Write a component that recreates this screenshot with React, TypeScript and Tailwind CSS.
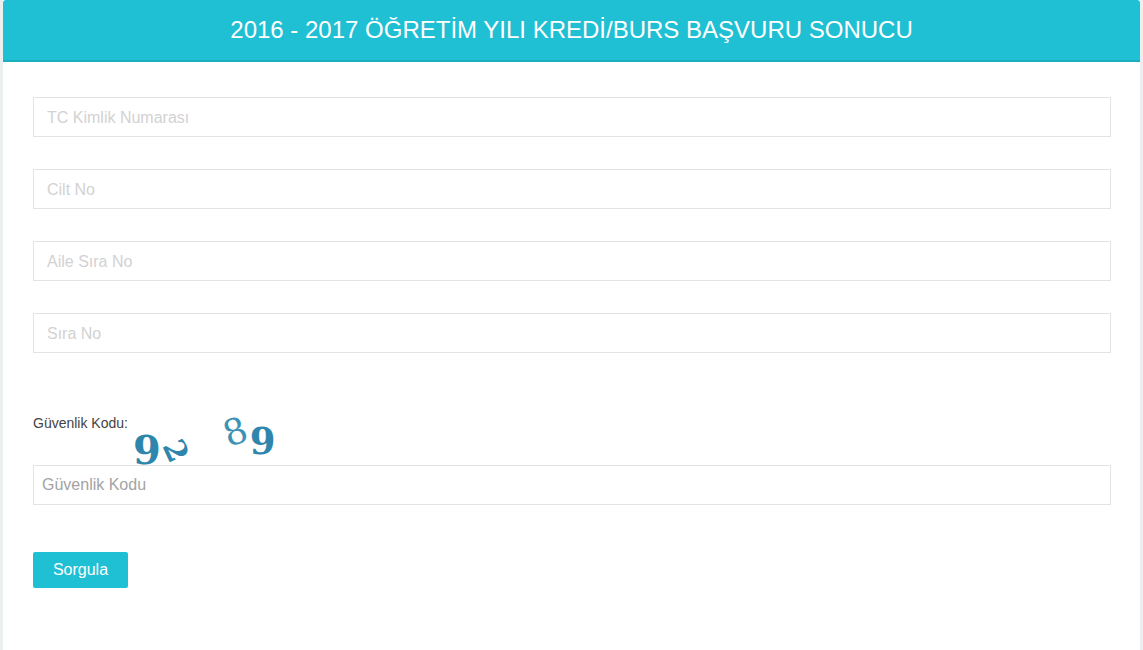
const fields = ["TC Kimlik Numarası", "Cilt No", "Aile Sıra No", "Sıra No"];

function Captcha() {
  return (
    <div className="-mt-[14px] ml-[100px] flex h-[47px] items-start font-['DejaVu_Serif',serif] text-[#2f86ad]">
      <span className="mt-[12px] text-[40px] font-bold leading-none">9</span>
      <span className="mt-[18px] ml-[4px] rotate-[65deg] text-[30px] font-bold leading-none">2</span>
      <span className="-mt-[4px] ml-[38px] -rotate-[20deg] text-[36px] leading-none text-[#3c93b5]">8</span>
      <span className="mt-[5px] ml-[3px] text-[37px] font-bold leading-none">9</span>
    </div>
  );
}

export default function App() {
  return (
    <div className="h-[650px] overflow-hidden border-x-[3px] border-[#eceff0] bg-white font-['Liberation_Sans',sans-serif]">
      <div className="flex h-[62px] items-center justify-center rounded-t-[3px] border-b-2 border-[#1aaebf] bg-[#1fc0d3] text-[24px] text-white">
        2016 - 2017 ÖĞRETİM YILI KREDİ/BURS BAŞVURU SONUCU
      </div>
      <div className="pl-[30px] pr-[29px] pt-[35px]">
        <div className="flex flex-col gap-[32px]">
          {fields.map((f) => (
            <input
              key={f}
              placeholder={f}
              className="h-[40px] w-full border border-[#e3e3e3] px-[13px] pt-[2px] text-[16px] placeholder:text-[#d2d2d2]"
            />
          ))}
        </div>
        <div className="mt-[61px] text-[14px] leading-[18px] text-[#444]">Güvenlik Kodu:</div>
        <Captcha />
        <input
          placeholder="Güvenlik Kodu"
          className="block h-[40px] w-full border border-[#e3e3e3] px-[8px] text-[16px] placeholder:text-[#a3a3a3]"
        />
        <button className="mt-[47px] h-[36px] w-[95px] rounded-[2px] bg-[#1fc0d3] text-[16px] text-white">
          Sorgula
        </button>
      </div>
    </div>
  );
}
